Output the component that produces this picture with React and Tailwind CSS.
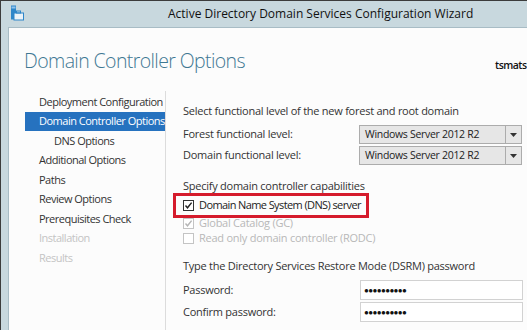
import React from 'react';

const navItems = [
  { label: 'Deployment Configuration' },
  { label: 'Domain Controller Options', active: true },
  { label: 'DNS Options', indent: true },
  { label: 'Additional Options' },
  { label: 'Paths' },
  { label: 'Review Options' },
  { label: 'Prerequisites Check' },
  { label: 'Installation', disabled: true },
  { label: 'Results', disabled: true },
];

const CheckBox = ({ checked, disabled }) => (
  <span
    className={`w-[11px] h-[11px] shrink-0 border flex items-center justify-center bg-white ${
      disabled ? 'border-[#c4c4c4]' : 'border-[#333333]'
    }`}
  >
    {checked && (
      <svg width="9" height="9" viewBox="0 0 9 9">
        <path
          d="M1.5 4.5 L3.5 6.8 L7.6 1.6"
          fill="none"
          stroke={disabled ? '#b5b5b5' : '#222222'}
          strokeWidth="1.4"
        />
      </svg>
    )}
  </span>
);

const Dropdown = ({ value }) => (
  <div className="w-[163px] h-[19px] flex border border-[#acacac] bg-[#e6e6e6]">
    <div className="flex-1 flex items-center pl-[5px] text-[10.5px] tracking-[-0.3px] text-[#222]">{value}</div>
    <div className="w-[16px] border-l border-[#acacac] flex items-center justify-center">
      <svg width="7" height="4" viewBox="0 0 7 4">
        <path d="M0 0 H7 L3.5 4 Z" fill="#333" />
      </svg>
    </div>
  </div>
);

const PasswordBox = () => (
  <div className="w-[163px] h-[20px] border border-[#d2d2d2] bg-white flex items-center pl-[3px] text-[8px] tracking-[-0.6px] text-[#111]">
    ●●●●●●●●●●
  </div>
);

export default function App() {
  return (
    <div
      className="w-[527px] h-[330px] overflow-hidden bg-[#c8d8de] border-t border-l border-[#3c3c3c] flex flex-col"
      style={{ fontFamily: '"Open Sans", "Noto Sans", sans-serif' }}
    >
      {/* Title bar */}
      <div className="h-[26px] flex items-center relative shrink-0">
        <svg className="absolute left-[9px] top-[4px]" width="14" height="16" viewBox="0 0 14 16">
          <rect x="1" y="0.5" width="5" height="14" fill="#2e86c9" />
          <rect x="1.5" y="1.5" width="4" height="2" fill="#8fc4ee" />
          <rect x="4" y="8" width="9.5" height="7" fill="#eaf2f8" stroke="#2e86c9" />
          <rect x="6.5" y="6" width="4" height="2" fill="none" stroke="#2e86c9" />
        </svg>
        <div className="pl-[167px] text-[12px] text-[#111]">
          Active Directory Domain Services Configuration Wizard
        </div>
      </div>

      {/* Body */}
      <div className="flex-1 ml-[7px] bg-[#fcfcfc] border-l border-t border-[#a8bcc5] flex flex-col">
        <div className="h-[63px] flex relative shrink-0">
          <h1 className="pl-[15px] pt-[19px] text-[19.5px] leading-[28px] font-light text-[#3f7893] tracking-[-0.6px]">
            Domain Controller Options
          </h1>
          <div className="absolute left-[486px] top-[30px] text-[10.5px] font-semibold tracking-[-0.5px] whitespace-nowrap text-[#111]">
            tsmatsu
          </div>
        </div>

        <div className="flex flex-1">
          {/* Left nav */}
          <div className="w-[157px] border-r border-[#dcdcdc] pt-[1px] pl-[16px]">
            {navItems.map((item) => (
              <div
                key={item.label}
                className={`h-[19.5px] flex items-center text-[11px] tracking-[-0.5px] whitespace-nowrap ${
                  item.indent ? 'pl-[29px]' : 'pl-[14px]'
                } ${
                  item.active
                    ? 'bg-[#2672bf] text-white'
                    : item.disabled
                    ? 'text-[#c4c4c4]'
                    : 'text-[#333]'
                }`}
              >
                {item.label}
              </div>
            ))}
          </div>

          {/* Right content */}
          <div className="flex-1 pl-[17px] pt-[13px] text-[11px] tracking-[-0.25px] text-[#333]">
            <div className="h-[14px] leading-[14px]">Select functional level of the new forest and root domain</div>
            <div className="mt-[7px] flex items-center h-[19px]">
              <span className="w-[176px]">Forest functional level:</span>
              <Dropdown value="Windows Server 2012 R2" />
            </div>
            <div className="mt-[2px] flex items-center h-[19px]">
              <span className="w-[176px]">Domain functional level:</span>
              <Dropdown value="Windows Server 2012 R2" />
            </div>

            <div className="mt-[14px] h-[14px] leading-[14px]">Specify domain controller capabilities</div>
            <div className="-ml-[10px] w-[196px] h-[25px] border-[3px] border-[#d51b2c] flex items-center pl-[7px] gap-[5px] whitespace-nowrap">
              <CheckBox checked />
              <span className="text-[#222] tracking-[-0.6px]">Domain Name System (DNS) server</span>
            </div>
            <div className="mt-[-2px] flex items-center gap-[5px] h-[15px] text-[#b8b8b8]">
              <CheckBox checked disabled />
              <span>Global Catalog (GC)</span>
            </div>
            <div className="flex items-center gap-[5px] h-[15px] text-[#b8b8b8]">
              <CheckBox disabled />
              <span>Read only domain controller (RODC)</span>
            </div>

            <div className="mt-[13px] h-[14px] leading-[14px]">
              Type the Directory Services Restore Mode (DSRM) password
            </div>
            <div className="mt-[7px] flex items-center h-[20px]">
              <span className="w-[177px]">Password:</span>
              <PasswordBox />
            </div>
            <div className="mt-[2px] flex items-center h-[20px]">
              <span className="w-[177px]">Confirm password:</span>
              <PasswordBox />
            </div>
          </div>
        </div>
      </div>
    </div>
  );
}
